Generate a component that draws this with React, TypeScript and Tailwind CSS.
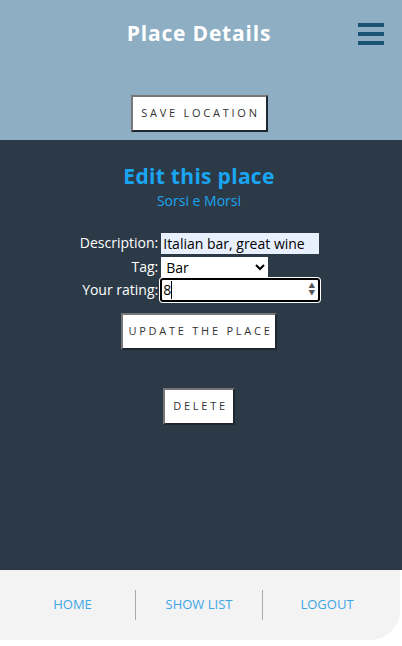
import React from 'react';

const btn =
  'bg-white text-[#333] text-[11px] tracking-[0.25em] uppercase border-2 border-t-[#777] border-l-[#777] border-b-[#1e2630] border-r-[#1e2630]';

const App: React.FC = () => {
  return (
    <div className="w-full min-h-screen bg-white text-white" style={{ fontFamily: '"Open Sans", Inter, sans-serif' }}>
      {/* Header */}
      <header className="bg-[#8daec3] h-[140px] flex flex-col items-center relative pr-[4px]">
        <h1 className="mt-[19px] text-[21px] tracking-[0.8px] font-bold leading-[28px]">Place Details</h1>
        <div className="absolute right-[18px] top-[23px] flex flex-col gap-[5px]">
          <span className="block w-[26px] h-[4px] bg-[#1a5475]" />
          <span className="block w-[26px] h-[4px] bg-[#1a5475]" />
          <span className="block w-[26px] h-[4px] bg-[#1a5475]" />
        </div>
        <button className={`${btn} mt-[48px] w-[137px] h-[37px] pl-[3px]`}>Save location</button>
      </header>

      {/* Edit section */}
      <main className="bg-[#2c3a47] h-[430px] flex flex-col items-center pr-[4px]">
        <h2 className="mt-[22px] text-[21px] tracking-[0.3px] font-bold text-[#1aa5f2] leading-[28px]">Edit this place</h2>
        <p className="text-[14px] text-[#1aa5f2] leading-[20px] mt-[1px]">Sorsi e Morsi</p>

        <form className="mt-[21px] grid grid-cols-[auto_auto] gap-x-[3px] items-center text-[14px] pl-[2px]">
          <label className="text-right leading-[22px]">Description:</label>
          <input
            defaultValue="Italian bar, great wine"
            className="w-[158px] h-[21px] bg-[#e8f0fe] text-black px-[2px] text-[14px] outline-none"
          />
          <label className="text-right leading-[22px] mt-[2px]">Tag:</label>
          <select defaultValue="Bar" className="w-[107px] h-[21px] bg-white text-black text-[14px] mt-[2px] px-[1px] outline-none">
            <option>Bar</option>
            <option>Restaurant</option>
          </select>
          <label className="text-right leading-[22px]">Your rating:</label>
          <div className="w-[160px] h-[24px] ml-[-1px] rounded-[3px] border-2 border-black bg-white ring-1 ring-white flex items-center text-black">
            <span className="pl-[1px] leading-[18px] border-r border-black">8</span>
            <span className="ml-auto mr-[3px] flex flex-col text-[#555] text-[7px] leading-[8px]">
              <span>▲</span>
              <span>▼</span>
            </span>
          </div>
        </form>

        <button type="button" className={`${btn} mt-[11px] w-[156px] h-[37px] pl-[3px]`}>Update the place</button>
        <button type="button" className={`${btn} mt-[38px] w-[72px] h-[37px] pl-[3px]`}>Delete</button>
      </main>

      {/* Footer nav */}
      <footer className="bg-[#f3f3f3] w-[400px] h-[70px] rounded-br-[30px] flex items-center text-[13px] text-[#3ea6e6]">
        <a className="w-[135px] pl-[10px] text-center">HOME</a>
        <span className="w-px h-[30px] bg-[#aaa]" />
        <a className="w-[126px] text-center">SHOW LIST</a>
        <span className="w-px h-[30px] bg-[#aaa]" />
        <a className="w-[128px] text-center">LOGOUT</a>
      </footer>
    </div>
  );
};

export default App;
